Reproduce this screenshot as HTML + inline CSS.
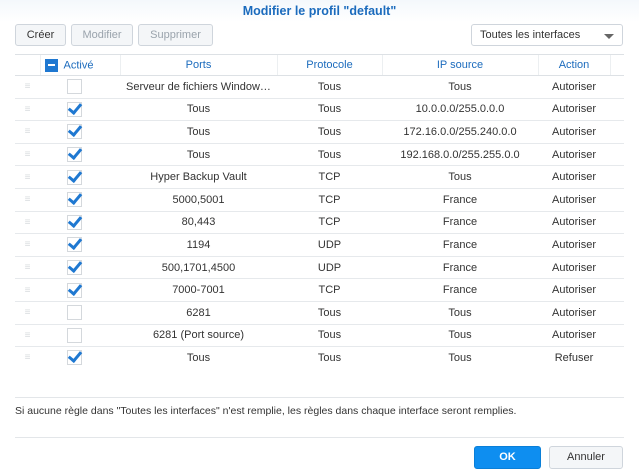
<!DOCTYPE html><html><head><style>
body{margin:0;width:639px;height:475px;background:#fff;font-family:"Liberation Sans",sans-serif;font-size:11px;color:#333;position:relative;overflow:hidden}
.ab{position:absolute}
.title{left:0;top:0;width:639px;height:22px;text-align:center;line-height:22px;font-weight:bold;font-size:12.5px;color:#1b6bbd;background:linear-gradient(#f4f8fc,#fff)}
.btn{position:absolute;top:24px;height:22px;border:1px solid #cfd5dc;border-radius:3px;background:#f4f6f8;text-align:center;line-height:21px;box-sizing:border-box;color:#333}
.dis{color:#9aa3ac}
table{position:absolute;left:15px;top:54px;width:609px;border-collapse:collapse;table-layout:fixed}
td{height:21.6px;padding:0;text-align:center;border-top:1px solid #e6e9ec;white-space:nowrap;overflow:hidden}
td:nth-child(2){padding-right:12px}
th{height:20px;font-weight:normal;color:#1b6bbd;border-top:1px solid #dde1e5;border-bottom:1px solid #dde1e5;border-left:1px solid #eceff1;padding:0}
th:first-child{border-left:none}
.cb{display:inline-block;width:15px;height:15px;border:1px solid #d4d8dc;box-sizing:border-box;vertical-align:middle;position:relative;background:#fff}
.ck::after{content:"";position:absolute;left:3px;top:-2px;width:5px;height:10px;border:solid #1f78d1;border-width:0 3px 3px 0;transform:rotate(40deg)}
.h{color:#d8dcdf;font-size:10px}
</style></head><body>
<div class="ab title">Modifier le profil "default"</div>
<div class="btn" style="left:15px;width:51px">Créer</div>
<div class="btn dis" style="left:71px;width:62px">Modifier</div>
<div class="btn dis" style="left:138px;width:75px">Supprimer</div>
<div class="btn" style="left:471px;width:152px;background:#fff;text-align:left;padding-left:8px">Toutes les interfaces<span style="position:absolute;right:8px;top:9px;border:5px solid transparent;border-top:5px solid #666;border-bottom:0"></span></div>
<table>
<colgroup><col style="width:25px"><col style="width:80px"><col style="width:157px"><col style="width:105px"><col style="width:156px"><col style="width:72px"><col></colgroup>
<tr><th></th><th style="text-align:left;padding-left:4px"><span style="display:inline-block;width:13px;height:13px;background:#1f78d1;vertical-align:middle;position:relative;margin-right:6px"><span style="position:absolute;left:3px;top:5px;width:7px;height:2px;background:#fff"></span></span>Activé</th><th>Ports</th><th>Protocole</th><th>IP source</th><th>Action</th><th></th></tr>
<tr><td class="h">≡</td><td><span class="cb"></span></td><td>Serveur de fichiers Window…</td><td>Tous</td><td>Tous</td><td>Autoriser</td><td></td></tr>
<tr><td class="h">≡</td><td><span class="cb ck"></span></td><td>Tous</td><td>Tous</td><td>10.0.0.0/255.0.0.0</td><td>Autoriser</td><td></td></tr>
<tr><td class="h">≡</td><td><span class="cb ck"></span></td><td>Tous</td><td>Tous</td><td>172.16.0.0/255.240.0.0</td><td>Autoriser</td><td></td></tr>
<tr><td class="h">≡</td><td><span class="cb ck"></span></td><td>Tous</td><td>Tous</td><td>192.168.0.0/255.255.0.0</td><td>Autoriser</td><td></td></tr>
<tr><td class="h">≡</td><td><span class="cb ck"></span></td><td>Hyper Backup Vault</td><td>TCP</td><td>Tous</td><td>Autoriser</td><td></td></tr>
<tr><td class="h">≡</td><td><span class="cb ck"></span></td><td>5000,5001</td><td>TCP</td><td>France</td><td>Autoriser</td><td></td></tr>
<tr><td class="h">≡</td><td><span class="cb ck"></span></td><td>80,443</td><td>TCP</td><td>France</td><td>Autoriser</td><td></td></tr>
<tr><td class="h">≡</td><td><span class="cb ck"></span></td><td>1194</td><td>UDP</td><td>France</td><td>Autoriser</td><td></td></tr>
<tr><td class="h">≡</td><td><span class="cb ck"></span></td><td>500,1701,4500</td><td>UDP</td><td>France</td><td>Autoriser</td><td></td></tr>
<tr><td class="h">≡</td><td><span class="cb ck"></span></td><td>7000-7001</td><td>TCP</td><td>France</td><td>Autoriser</td><td></td></tr>
<tr><td class="h">≡</td><td><span class="cb"></span></td><td>6281</td><td>Tous</td><td>Tous</td><td>Autoriser</td><td></td></tr>
<tr><td class="h">≡</td><td><span class="cb"></span></td><td>6281 (Port source)</td><td>Tous</td><td>Tous</td><td>Autoriser</td><td></td></tr>
<tr><td class="h">≡</td><td><span class="cb ck"></span></td><td>Tous</td><td>Tous</td><td>Tous</td><td>Refuser</td><td></td></tr>
</table>
<div class="ab" style="left:15px;top:397px;width:609px;border-top:1px solid #e3e6e9"></div>
<div class="ab" style="left:15px;top:405px;font-size:10.5px">Si aucune règle dans "Toutes les interfaces" n'est remplie, les règles dans chaque interface seront remplies.</div>
<div class="ab" style="left:15px;top:437px;width:609px;border-top:1px solid #e3e6e9"></div>
<div class="btn" style="left:474px;top:446px;width:67px;height:23px;background:#0e8ef0;border-color:#0a7fd8;color:#fff;font-weight:bold">OK</div>
<div class="btn" style="left:549px;top:446px;width:74px;height:23px">Annuler</div>
</body></html>
